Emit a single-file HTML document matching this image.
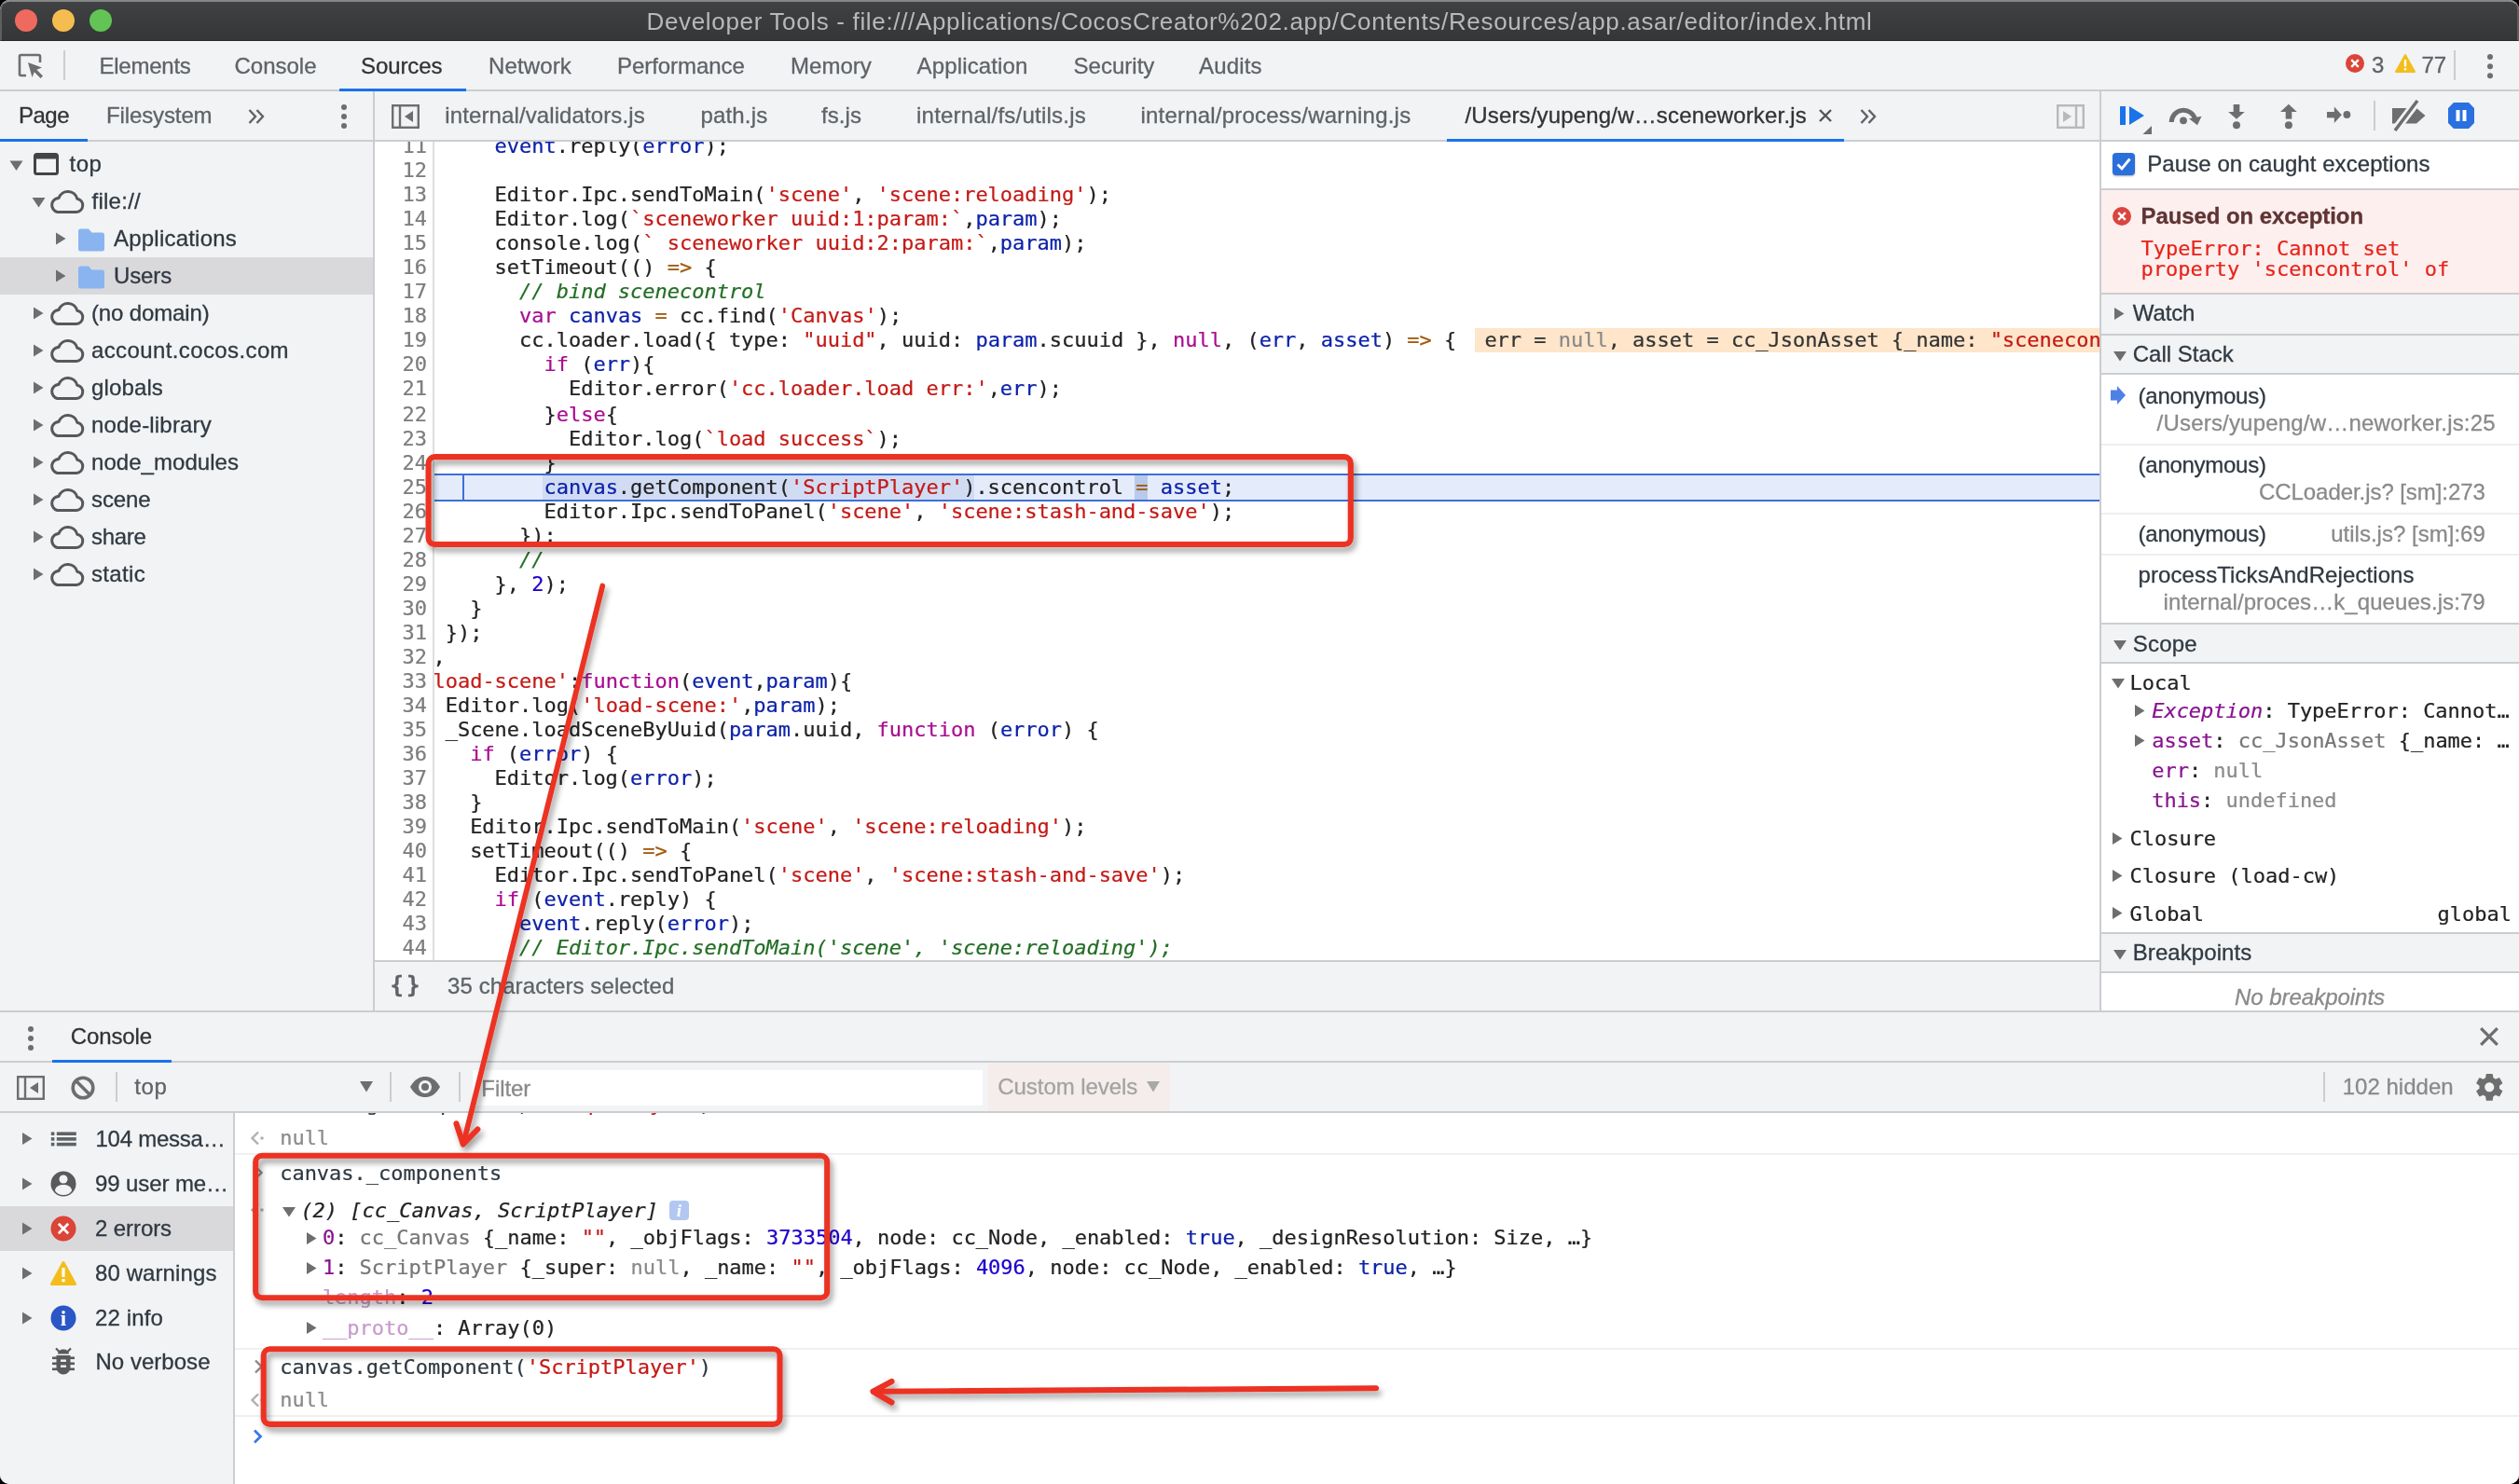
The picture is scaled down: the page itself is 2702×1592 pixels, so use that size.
<!DOCTYPE html>
<html lang="en">
<head>
<meta charset="utf-8">
<title>Developer Tools</title>
<style>
html,body{margin:0;padding:0;background:#000;}
body{width:2702px;height:1592px;overflow:hidden;position:relative;font-family:"Liberation Sans",sans-serif;font-size:24px;color:#303942;}
#win{position:absolute;left:0;top:0;width:2702px;height:1592px;overflow:hidden;border-radius:10px;background:#fff;will-change:transform;}
.a{position:absolute;}
.t{position:absolute;white-space:nowrap;line-height:28px;height:28px;-webkit-text-stroke:0.3px currentColor;}
.m{font-family:"DejaVu Sans Mono","Liberation Mono",monospace;font-size:22px;line-height:26px;white-space:pre;letter-spacing:-0.02px;-webkit-text-stroke:0.22px currentColor;}
.g{color:#5f6368;}
.bar{background:#f1f3f4;}
.hl{position:absolute;background:#cbcdd1;}
.vd{position:absolute;width:2px;background:#cdcdcd;}
svg{position:absolute;overflow:visible;}
/* title bar */
#title{position:absolute;left:0;top:0;width:2702px;height:44px;background:linear-gradient(#404143,#353638);box-sizing:border-box;border-top:2px solid #858688;border-left:2px solid #5e5f61;border-right:2px solid #5e5f61;border-bottom:1.500px solid #28292a;border-radius:10px 10px 0 0;}
#title .hi{display:none;}
.tl{position:absolute;top:8px;margin-left:-2px;width:24px;height:24px;border-radius:50%;}
#ttext{position:absolute;left:-2px;width:2702px;text-align:center;top:4.800px;font-size:26px;line-height:32px;color:#b9b9b9;white-space:nowrap;}
/* code */
.k{color:#aa0d91;} .s{color:#c41a16;} .v{color:#0d22aa;} .n{color:#1c00cf;} .c{color:#236e25;font-style:italic;} .o{color:#a1590c;} .at{color:#aa0d91;}
#code,#gut{white-space:normal;}
#code div{height:26px;white-space:pre;}
#code div:nth-child(11),#gut div:nth-child(11){margin-bottom:2px;}
#gut div{height:26px;text-align:right;color:#7d7d7d;}
/* object props */
.pn{color:#881391;} .gy{color:#8a8a8a;} .gn{color:#777;} .bk{color:#222;}
</style>
</head>
<body>
<div id="win">
<!-- TITLE BAR -->
<div id="title"><div class="hi"></div>
<div class="tl" style="left:16px;background:#ee6a5f;"></div>
<div class="tl" style="left:56px;background:#f5bd4f;"></div>
<div class="tl" style="left:96px;background:#61c454;"></div>
<div id="ttext"><span style="letter-spacing:0.664px">Developer Tools - file:///Applications/CocosCreator%202.app/Contents/Resources/app.asar/editor/index.html</span></div>
</div>
<!-- MAIN TABS -->
<div class="a bar" style="left:0;top:44px;width:2702px;height:52px;"></div>
<div class="hl" style="left:0;top:96px;width:2702px;height:2px;"></div>
<svg style="left:19px;top:57px;" width="28" height="28" viewBox="0 0 28 28"><path d="M24 10V3.5a1.5 1.5 0 0 0-1.500-1.500H3.500A1.500 1.500 0 0 0 2 3.500V22.500A1.500 1.500 0 0 0 3.500 24H9" fill="none" stroke="#6e6e6e" stroke-width="2.6"/><path d="M11 10 L26 15.500 L20.300 17.800 L27 24.500 L24.500 27 L17.800 20.300 L15.500 26 Z" fill="#6e6e6e"/></svg>
<div class="vd" style="left:68px;top:54px;height:32px;"></div>
<div class="t g" style="left:106.500px;top:56.800px;"><span style="letter-spacing:-0.243px">Elements</span></div>
<div class="t g" style="left:251.500px;top:56.800px;"><span style="letter-spacing:-0.009px">Console</span></div>
<div class="t" style="left:387px;top:56.800px;color:#333;"><span style="letter-spacing:-0.092px">Sources</span></div>
<div class="t g" style="left:524px;top:56.800px;"><span style="letter-spacing:0.138px">Network</span></div>
<div class="t g" style="left:662px;top:56.800px;"><span style="letter-spacing:-0.054px">Performance</span></div>
<div class="t g" style="left:848px;top:56.800px;"><span style="letter-spacing:0.038px">Memory</span></div>
<div class="t g" style="left:983.600px;top:56.800px;"><span style="letter-spacing:0.143px">Application</span></div>
<div class="t g" style="left:1151.500px;top:56.800px;"><span style="letter-spacing:0.025px">Security</span></div>
<div class="t g" style="left:1286px;top:56.800px;"><span style="letter-spacing:0.149px">Audits</span></div>
<div class="a" style="left:364px;top:95px;width:136px;height:3px;background:#1a73e8;"></div>
<!-- error / warning counters -->
<svg style="left:2516px;top:58px;" width="20" height="20" viewBox="0 0 20 20"><circle cx="10" cy="10" r="10" fill="#db4437"/><path d="M6.200 6.200 L13.800 13.800 M13.800 6.200 L6.200 13.800" stroke="#fff" stroke-width="2.400"/></svg>
<div class="t g" style="left:2544px;top:56.400px;">3</div>
<svg style="left:2569px;top:58px;" width="22" height="20" viewBox="0 0 22 20"><path d="M11 1 L21 19 H1 Z" fill="#f4bd1c" stroke="#f4bd1c" stroke-width="2" stroke-linejoin="round"/><rect x="9.800" y="6" width="2.400" height="7.500" fill="#fff"/><rect x="9.800" y="15" width="2.400" height="2.400" fill="#fff"/></svg>
<div class="t g" style="left:2597.500px;top:56.400px;">77</div>
<div class="vd" style="left:2632px;top:54px;height:32px;"></div>
<svg style="left:2666px;top:56px;" width="10" height="30" viewBox="0 0 10 30"><circle cx="5" cy="5" r="3" fill="#6e6e6e"/><circle cx="5" cy="15.200" r="3" fill="#6e6e6e"/><circle cx="5" cy="25.300" r="3" fill="#6e6e6e"/></svg>
<!-- SOURCES: second bar -->
<div class="a bar" style="left:0;top:98px;width:2702px;height:52px;"></div>
<div class="hl" style="left:0;top:150px;width:2702px;height:2px;"></div>
<!-- NAVIGATOR -->
<div class="a bar" style="left:0;top:152px;width:400px;height:932px;"></div>
<div class="hl" style="left:400px;top:98px;width:2px;height:986px;"></div>
<div class="t" style="left:20px;top:109.500px;color:#333;"><span style="letter-spacing:-0.516px">Page</span></div>
<div class="t g" style="left:114px;top:109.500px;"><span style="letter-spacing:-0.119px">Filesystem</span></div>
<svg style="left:266px;top:116px;" width="18" height="18" viewBox="0 0 18 18"><path d="M1.500 2 L8 9 L1.500 16 M9.500 2 L16 9 L9.500 16" fill="none" stroke="#5f6368" stroke-width="2.400"/></svg>
<svg style="left:364px;top:110px;" width="10" height="30" viewBox="0 0 10 30"><circle cx="5" cy="5" r="3" fill="#6e6e6e"/><circle cx="5" cy="15" r="3" fill="#6e6e6e"/><circle cx="5" cy="25" r="3" fill="#6e6e6e"/></svg>
<div class="a" style="left:0;top:149px;width:94px;height:3px;background:#1a73e8;"></div>
<!-- tree -->
<div class="a" style="left:0;top:276px;width:400px;height:40px;background:#d9d9dc;"></div>
<svg style="left:0;top:152px;" width="400" height="520" viewBox="0 0 400 520">
<g transform="translate(10.500,20.500)"><path d="M0 0 H14 L7 10.500 Z" fill="#6e6e6e"/></g>
<rect x="37.500" y="13.500" width="24" height="21" rx="2" fill="none" stroke="#444" stroke-width="3"/><rect x="37.500" y="13.500" width="24" height="5" fill="#444"/>
<g transform="translate(34.500,60)"><path d="M0 0 H14 L7 10.500 Z" fill="#6e6e6e"/></g>
<g transform="translate(53,48)"><path transform="translate(-2.4,1.2) scale(1.14)" d="M9.500 23 H27.500 A6.300 6.300 0 0 0 28.200 10.500 A9 9 0 0 0 11 9.800 A6.700 6.700 0 0 0 9.500 23 Z" fill="none" stroke="#56585c" stroke-width="2.650" stroke-linejoin="round"/></g>
<g transform="translate(60,97.500)"><path d="M0 0 L10.500 6.500 L0 13 Z" fill="#6e6e6e"/></g><g transform="translate(84,93.500)"><path d="M0 2.500 A2.500 2.500 0 0 1 2.500 0 H11 L14.500 4 H25.500 A2.500 2.500 0 0 1 28 6.500 V21.500 A2.500 2.500 0 0 1 25.500 24 H2.500 A2.500 2.500 0 0 1 0 21.500 Z" fill="#8ab4f0"/></g>
<g transform="translate(60,137.500)"><path d="M0 0 L10.500 6.500 L0 13 Z" fill="#6e6e6e"/></g><g transform="translate(84,133.500)"><path d="M0 2.500 A2.500 2.500 0 0 1 2.500 0 H11 L14.500 4 H25.500 A2.500 2.500 0 0 1 28 6.500 V21.500 A2.500 2.500 0 0 1 25.500 24 H2.500 A2.500 2.500 0 0 1 0 21.500 Z" fill="#8ab4f0"/></g>
<g transform="translate(36,177.500)"><path d="M0 0 L10.500 6.500 L0 13 Z" fill="#6e6e6e"/></g><g transform="translate(53,168)"><path transform="translate(-2.4,1.2) scale(1.14)" d="M9.500 23 H27.500 A6.300 6.300 0 0 0 28.200 10.500 A9 9 0 0 0 11 9.800 A6.700 6.700 0 0 0 9.500 23 Z" fill="none" stroke="#56585c" stroke-width="2.650" stroke-linejoin="round"/></g>
<g transform="translate(36,217.500)"><path d="M0 0 L10.500 6.500 L0 13 Z" fill="#6e6e6e"/></g><g transform="translate(53,208)"><path transform="translate(-2.4,1.2) scale(1.14)" d="M9.500 23 H27.500 A6.300 6.300 0 0 0 28.200 10.500 A9 9 0 0 0 11 9.800 A6.700 6.700 0 0 0 9.500 23 Z" fill="none" stroke="#56585c" stroke-width="2.650" stroke-linejoin="round"/></g>
<g transform="translate(36,257.500)"><path d="M0 0 L10.500 6.500 L0 13 Z" fill="#6e6e6e"/></g><g transform="translate(53,248)"><path transform="translate(-2.4,1.2) scale(1.14)" d="M9.500 23 H27.500 A6.300 6.300 0 0 0 28.200 10.500 A9 9 0 0 0 11 9.800 A6.700 6.700 0 0 0 9.500 23 Z" fill="none" stroke="#56585c" stroke-width="2.650" stroke-linejoin="round"/></g>
<g transform="translate(36,297.500)"><path d="M0 0 L10.500 6.500 L0 13 Z" fill="#6e6e6e"/></g><g transform="translate(53,288)"><path transform="translate(-2.4,1.2) scale(1.14)" d="M9.500 23 H27.500 A6.300 6.300 0 0 0 28.200 10.500 A9 9 0 0 0 11 9.800 A6.700 6.700 0 0 0 9.500 23 Z" fill="none" stroke="#56585c" stroke-width="2.650" stroke-linejoin="round"/></g>
<g transform="translate(36,337.500)"><path d="M0 0 L10.500 6.500 L0 13 Z" fill="#6e6e6e"/></g><g transform="translate(53,328)"><path transform="translate(-2.4,1.2) scale(1.14)" d="M9.500 23 H27.500 A6.300 6.300 0 0 0 28.200 10.500 A9 9 0 0 0 11 9.800 A6.700 6.700 0 0 0 9.500 23 Z" fill="none" stroke="#56585c" stroke-width="2.650" stroke-linejoin="round"/></g>
<g transform="translate(36,377.500)"><path d="M0 0 L10.500 6.500 L0 13 Z" fill="#6e6e6e"/></g><g transform="translate(53,368)"><path transform="translate(-2.4,1.2) scale(1.14)" d="M9.500 23 H27.500 A6.300 6.300 0 0 0 28.200 10.500 A9 9 0 0 0 11 9.800 A6.700 6.700 0 0 0 9.500 23 Z" fill="none" stroke="#56585c" stroke-width="2.650" stroke-linejoin="round"/></g>
<g transform="translate(36,417.500)"><path d="M0 0 L10.500 6.500 L0 13 Z" fill="#6e6e6e"/></g><g transform="translate(53,408)"><path transform="translate(-2.4,1.2) scale(1.14)" d="M9.500 23 H27.500 A6.300 6.300 0 0 0 28.200 10.500 A9 9 0 0 0 11 9.800 A6.700 6.700 0 0 0 9.500 23 Z" fill="none" stroke="#56585c" stroke-width="2.650" stroke-linejoin="round"/></g>
<g transform="translate(36,457.500)"><path d="M0 0 L10.500 6.500 L0 13 Z" fill="#6e6e6e"/></g><g transform="translate(53,448)"><path transform="translate(-2.4,1.2) scale(1.14)" d="M9.500 23 H27.500 A6.300 6.300 0 0 0 28.200 10.500 A9 9 0 0 0 11 9.800 A6.700 6.700 0 0 0 9.500 23 Z" fill="none" stroke="#56585c" stroke-width="2.650" stroke-linejoin="round"/></g>
</svg>
<div class="t" style="left:74.500px;top:161.500px;"><span style="letter-spacing:0.542px">top</span></div>
<div class="t" style="left:98.500px;top:201.500px;"><span style="letter-spacing:0.259px">file://</span></div>
<div class="t" style="left:122px;top:241.500px;"><span style="letter-spacing:0.215px">Applications</span></div>
<div class="t" style="left:122px;top:281.500px;"><span style="letter-spacing:-0.134px">Users</span></div>
<div class="t" style="left:98px;top:321.500px;"><span style="letter-spacing:-0.142px">(no domain)</span></div>
<div class="t" style="left:98px;top:361.500px;"><span style="letter-spacing:0.386px">account.cocos.com</span></div>
<div class="t" style="left:98px;top:401.500px;"><span style="letter-spacing:0.134px">globals</span></div>
<div class="t" style="left:98px;top:441.500px;"><span style="letter-spacing:0.189px">node-library</span></div>
<div class="t" style="left:98px;top:481.500px;"><span style="letter-spacing:0.046px">node_modules</span></div>
<div class="t" style="left:98px;top:521.500px;"><span style="letter-spacing:-0.109px">scene</span></div>
<div class="t" style="left:98px;top:561.500px;"><span style="letter-spacing:-0.309px">share</span></div>
<div class="t" style="left:98px;top:601.500px;"><span style="letter-spacing:0.331px">static</span></div>
<!-- EDITOR TAB STRIP -->
<svg style="left:420px;top:112px;" width="30" height="26" viewBox="0 0 30 26"><rect x="1.200" y="1.200" width="27.600" height="23.600" fill="none" stroke="#6e6e6e" stroke-width="2.400"/><path d="M9 1 V25" stroke="#6e6e6e" stroke-width="2.400"/><path d="M23 7 L14 13 L23 19 Z" fill="#6e6e6e"/></svg>
<div class="t g" style="left:477.300px;top:109.500px;"><span style="letter-spacing:0.109px">internal/validators.js</span></div>
<div class="t g" style="left:751.400px;top:109.500px;"><span style="letter-spacing:0.183px">path.js</span></div>
<div class="t g" style="left:881px;top:109.500px;"><span style="letter-spacing:0.066px">fs.js</span></div>
<div class="t g" style="left:983px;top:109.500px;"><span style="letter-spacing:0.230px">internal/fs/utils.js</span></div>
<div class="t g" style="left:1223.400px;top:109.500px;"><span style="letter-spacing:0.217px">internal/process/warning.js</span></div>
<div class="t" style="left:1571.400px;top:109.500px;color:#333;"><span style="letter-spacing:0.167px">/Users/yupeng/w…sceneworker.js</span></div>
<svg style="left:1950px;top:116px;" width="16" height="16" viewBox="0 0 16 16"><path d="M2 2 L14 14 M14 2 L2 14" stroke="#555" stroke-width="2.400"/></svg>
<div class="a" style="left:1552px;top:149px;width:426px;height:3px;background:#1a73e8;"></div>
<svg style="left:1995px;top:116px;" width="18" height="18" viewBox="0 0 18 18"><path d="M1.500 2 L8 9 L1.500 16 M9.500 2 L16 9 L9.500 16" fill="none" stroke="#5f6368" stroke-width="2.400"/></svg>
<svg style="left:2206px;top:112px;" width="30" height="26" viewBox="0 0 30 26"><rect x="1.200" y="1.200" width="27.600" height="23.600" fill="none" stroke="#b9b9b9" stroke-width="2.400"/><path d="M21 1 V25" stroke="#b9b9b9" stroke-width="2.400"/><path d="M7 7 L16 13 L7 19 Z" fill="#b9b9b9"/></svg>
<!-- EDITOR -->
<div class="a" id="ed" style="left:402px;top:152px;width:1850px;height:878px;background:#fff;overflow:hidden;">
 <!-- execution line -->
 <div class="a" style="left:64px;top:355.700px;width:1790px;height:30px;background:#e4ebfb;border-top:2px solid #3d6fd8;border-bottom:2px solid #3d6fd8;box-sizing:border-box;"></div>
 <div class="a" style="left:94px;top:355.700px;width:2px;height:30px;background:#3d6fd8;"></div>
 <div class="a" style="left:180px;top:357.700px;width:463px;height:26px;background:#d1dcf3;"></div>
 <div class="a" style="left:814.500px;top:357.700px;width:14px;height:26px;background:#b9c9ea;"></div>
 <!-- inline values line 19 -->
 <div class="a" style="left:1180px;top:200.400px;width:700px;height:25.200px;background:#ffe5c9;"></div>
 <div class="a m" style="left:1190.400px;top:200px;color:#333;">err = <span class="gy">null</span>, asset = cc_JsonAsset {_name: <span class="s">"scenecontrol"</span></div>
 <div id="code" class="a m" style="left:22.800px;top:-8px;color:#222;line-height:26px;">
<div>        <span class="v">event</span>.reply(<span class="v">error</span>);</div>
<div> </div>
<div>        Editor.Ipc.sendToMain(<span class="s">'scene'</span>, <span class="s">'scene:reloading'</span>);</div>
<div>        Editor.log(<span class="s">`sceneworker uuid:1:param:`</span>,<span class="v">param</span>);</div>
<div>        console.log(<span class="s">` sceneworker uuid:2:param:`</span>,<span class="v">param</span>);</div>
<div>        setTimeout(() <span class="o">=&gt;</span> {</div>
<div>          <span class="c">// bind scenecontrol</span></div>
<div>          <span class="k">var</span> <span class="v">canvas</span> <span class="o">=</span> cc.find(<span class="s">'Canvas'</span>);</div>
<div>          cc.loader.load({ type: <span class="s">"uuid"</span>, uuid: <span class="v">param</span>.scuuid }, <span class="at">null</span>, (<span class="v">err</span>, <span class="v">asset</span>) <span class="o">=&gt;</span> {</div>
<div>            <span class="k">if</span> (<span class="v">err</span>){</div>
<div>              Editor.error(<span class="s">'cc.loader.load err:'</span>,<span class="v">err</span>);</div>
<div>            }<span class="k">else</span>{</div>
<div>              Editor.log(<span class="s">`load success`</span>);</div>
<div>            }</div>
<div>            <span class="v">canvas</span>.getComponent(<span class="s">'ScriptPlayer'</span>).scencontrol <span class="o">=</span> <span class="v">asset</span>;</div>
<div>            Editor.Ipc.sendToPanel(<span class="s">'scene'</span>, <span class="s">'scene:stash-and-save'</span>);</div>
<div>          });</div>
<div>          <span class="c">//</span></div>
<div>        }, <span class="n">2</span>);</div>
<div>      }</div>
<div>    });</div>
<div>   ,</div>
<div>  <span class="s">'load-scene'</span>:<span class="k">function</span>(<span class="v">event</span>,<span class="v">param</span>){</div>
<div>    Editor.log(<span class="s">'load-scene:'</span>,<span class="v">param</span>);</div>
<div>    _Scene.loadSceneByUuid(<span class="v">param</span>.uuid, <span class="k">function</span> (<span class="v">error</span>) {</div>
<div>      <span class="k">if</span> (<span class="v">error</span>) {</div>
<div>        Editor.log(<span class="v">error</span>);</div>
<div>      }</div>
<div>      Editor.Ipc.sendToMain(<span class="s">'scene'</span>, <span class="s">'scene:reloading'</span>);</div>
<div>      setTimeout(() <span class="o">=&gt;</span> {</div>
<div>        Editor.Ipc.sendToPanel(<span class="s">'scene'</span>, <span class="s">'scene:stash-and-save'</span>);</div>
<div>        <span class="k">if</span> (<span class="v">event</span>.reply) {</div>
<div>          <span class="v">event</span>.reply(<span class="v">error</span>);</div>
<div>          <span class="c">// Editor.Ipc.sendToMain('scene', 'scene:reloading');</span></div>
 </div>
 <!-- gutter -->
 <div class="a" style="left:0;top:0;width:62px;height:878px;background:#fff;"></div>
 <div class="a" style="left:62px;top:0;width:2px;height:878px;background:#dedede;"></div>
 <div id="gut" class="a m" style="left:0;top:-8px;width:56px;line-height:26px;">
<div>11</div><div>12</div><div>13</div><div>14</div><div>15</div><div>16</div><div>17</div><div>18</div><div>19</div><div>20</div><div>21</div><div>22</div><div>23</div><div>24</div><div>25</div><div>26</div><div>27</div><div>28</div><div>29</div><div>30</div><div>31</div><div>32</div><div>33</div><div>34</div><div>35</div><div>36</div><div>37</div><div>38</div><div>39</div><div>40</div><div>41</div><div>42</div><div>43</div><div>44</div>
 </div>
</div>
<!-- editor status bar -->
<div class="hl" style="left:402px;top:1030px;width:1850px;height:2px;"></div>
<div class="a bar" style="left:402px;top:1032px;width:1850px;height:52px;"></div>
<div class="t g" style="left:418.600px;top:1043.300px;font-family:'DejaVu Sans Mono',monospace;font-size:24px;font-weight:bold;letter-spacing:3px;">{}</div>
<div class="t g" style="left:480px;top:1043.700px;"><span style="letter-spacing:0.092px">35 characters selected</span></div>
<!-- DEBUGGER SIDEBAR -->
<div class="hl" style="left:2252px;top:98px;width:2px;height:986px;"></div>
<div class="a" style="left:2254px;top:152px;width:448px;height:932px;background:#fff;"></div>
<!-- debug toolbar icons -->
<svg style="left:2270px;top:108px;" width="400" height="40" viewBox="0 0 400 40">
<g fill="#1a73e8"><rect x="4" y="6" width="6" height="20"/><path d="M14 6 L30 16 L14 26 Z"/></g>
<path d="M38 27 V36 H28.500 Z" fill="#6e6e6e"/>
<path d="M59.200 23 A12.900 12.900 0 0 1 84.600 20" fill="none" stroke="#6e6e6e" stroke-width="5"/>
<path d="M78 19.300 L91.500 16.800 L87 26.200 Z" fill="#6e6e6e"/><circle cx="72" cy="21.300" r="3.900" fill="#6e6e6e"/>
<g fill="#6e6e6e"><rect x="125.700" y="4" width="6.600" height="9"/><path d="M120.200 12 H137.700 L129 19.800 Z"/><circle cx="129" cy="26.200" r="4"/></g>
<g fill="#6e6e6e"><rect x="181.700" y="11" width="6.600" height="8.600"/><path d="M176 12 H193.800 L184.900 3.800 Z"/><circle cx="184.900" cy="26.200" r="4"/></g>
<g fill="#6e6e6e"><rect x="226" y="12" width="9" height="6.400"/><path d="M233.800 6.500 L241.800 15.200 L233.800 23.900 Z"/><circle cx="247.400" cy="15" r="3.900"/></g>
<rect x="276" y="0" width="2" height="32" fill="#cdcdcd"/>
<path d="M296 8 H322 L331.500 16 L322 24.500 H296 Z" fill="#6e6e6e"/>
<path d="M298 33 L324 -1" stroke="#f1f3f4" stroke-width="9"/><path d="M299 32 L323 0" stroke="#6e6e6e" stroke-width="3.600"/>
<path d="M362.400 3 H377.600 L383 8.400 V23.600 L377.600 29 H362.400 L357 23.600 V8.400 Z" fill="#2a70e0" stroke="#2a70e0" stroke-width="2" stroke-linejoin="round"/>
<rect x="364.500" y="10" width="4" height="12" fill="#fff"/><rect x="371.500" y="10" width="4" height="12" fill="#fff"/>
</svg>
<!-- pause on caught -->
<div class="a" style="left:2266px;top:164px;width:24px;height:24px;border-radius:4px;background:#2b6fdb;box-shadow:0 1px 2px rgba(0,0,0,.35);"></div>
<svg style="left:2266px;top:164px;" width="24" height="24" viewBox="0 0 24 24"><path d="M5.500 12.500 L10 17 L18.500 6.500" fill="none" stroke="#fff" stroke-width="2.800"/></svg>
<div class="t" style="left:2303.300px;top:162px;"><span style="letter-spacing:0.067px">Pause on caught exceptions</span></div>
<div class="hl" style="left:2254px;top:202px;width:448px;height:2px;"></div>
<!-- paused banner -->
<div class="a" style="left:2254px;top:204px;width:448px;height:110px;background:#fdefee;"></div>
<svg style="left:2266px;top:222px;" width="20" height="20" viewBox="0 0 20 20"><circle cx="10" cy="10" r="10" fill="#d9453f"/><path d="M6.200 6.200 L13.800 13.800 M13.800 6.200 L6.200 13.800" stroke="#fff" stroke-width="2.400"/></svg>
<div class="t" style="left:2296.600px;top:218.200px;font-weight:bold;color:#5f3434;"><span style="letter-spacing:-0.087px">Paused on exception</span></div>
<div class="a m" style="left:2296.500px;top:255.600px;line-height:22px;color:#e8241b;">TypeError: Cannot set
property 'scencontrol' of</div>
<!-- Watch -->
<div class="hl" style="left:2254px;top:314px;width:448px;height:2px;"></div>
<div class="a bar" style="left:2254px;top:316px;width:448px;height:42px;"></div>
<svg style="left:2268px;top:329.500px;" width="11" height="14" viewBox="0 0 11 14"><path d="M0 0 L10.500 6.500 L0 13 Z" fill="#6e6e6e"/></svg>
<div class="t" style="left:2287.800px;top:321.900px;"><span style="letter-spacing:-0.125px">Watch</span></div>
<div class="hl" style="left:2254px;top:358px;width:448px;height:2px;"></div>
<!-- Call Stack -->
<div class="a bar" style="left:2254px;top:360px;width:448px;height:40px;"></div>
<svg style="left:2266.500px;top:376.500px;" width="14" height="11" viewBox="0 0 14 11"><path d="M0 0 H14 L7 10.500 Z" fill="#6e6e6e"/></svg>
<div class="t" style="left:2287.800px;top:366px;"><span style="letter-spacing:-0.005px">Call Stack</span></div>
<div class="hl" style="left:2254px;top:400px;width:448px;height:2px;"></div>
<svg style="left:2264px;top:414px;" width="16" height="20" viewBox="0 0 16 20"><path d="M0 4.500 H7 V0 L16 10 L7 20 V15.500 H0 Z" fill="#4e80e6"/></svg>
<div class="t" style="left:2293.600px;top:410.700px;"><span style="letter-spacing:-0.278px">(anonymous)</span></div>
<div class="t" style="left:2313.600px;top:440.200px;color:#8a8a8a;"><span style="letter-spacing:0.190px">/Users/yupeng/w…neworker.js:25</span></div>
<div class="a" style="left:2254px;top:476px;width:448px;height:2px;background:#efefef;"></div>
<div class="t" style="left:2293.600px;top:484.600px;"><span style="letter-spacing:-0.278px">(anonymous)</span></div>
<div class="t" style="left:2423px;top:514.200px;color:#8a8a8a;"><span style="letter-spacing:-0.063px">CCLoader.js? [sm]:273</span></div>
<div class="a" style="left:2254px;top:550px;width:448px;height:2px;background:#efefef;"></div>
<div class="t" style="left:2293.600px;top:558.800px;"><span style="letter-spacing:-0.278px">(anonymous)</span></div>
<div class="t" style="left:2500.200px;top:558.800px;color:#8a8a8a;"><span style="letter-spacing:0.012px">utils.js? [sm]:69</span></div>
<div class="a" style="left:2254px;top:594px;width:448px;height:2px;background:#efefef;"></div>
<div class="t" style="left:2293.600px;top:602.800px;"><span style="letter-spacing:0.084px">processTicksAndRejections</span></div>
<div class="t" style="left:2320.600px;top:631.900px;color:#8a8a8a;"><span style="letter-spacing:0.077px">internal/proces…k_queues.js:79</span></div>
<!-- Scope -->
<div class="hl" style="left:2254px;top:668px;width:448px;height:2px;"></div>
<div class="a bar" style="left:2254px;top:670px;width:448px;height:40px;"></div>
<svg style="left:2266.500px;top:686.500px;" width="14" height="11" viewBox="0 0 14 11"><path d="M0 0 H14 L7 10.500 Z" fill="#6e6e6e"/></svg>
<div class="t" style="left:2287.800px;top:676.600px;"><span style="letter-spacing:0.188px">Scope</span></div>
<div class="hl" style="left:2254px;top:710px;width:448px;height:2px;"></div>
<svg style="left:2264.500px;top:728px;" width="14" height="11" viewBox="0 0 14 11"><path d="M0 0 H14 L7 10.500 Z" fill="#6e6e6e"/></svg>
<div class="a m bk" style="left:2284.500px;top:719.900px;">Local</div>
<svg style="left:2290px;top:756px;" width="11" height="14" viewBox="0 0 11 14"><path d="M0 0 L10.500 6.500 L0 13 Z" fill="#6e6e6e"/></svg>
<div class="a m bk" style="left:2308.200px;top:750.100px;width:386px;overflow:hidden;"><span class="pn" style="font-style:italic;">Exception</span>: TypeError: Cannot…</div>
<svg style="left:2290px;top:788px;" width="11" height="14" viewBox="0 0 11 14"><path d="M0 0 L10.500 6.500 L0 13 Z" fill="#6e6e6e"/></svg>
<div class="a m bk" style="left:2308.200px;top:781.900px;"><span class="pn">asset</span>: <span class="gn">cc_JsonAsset</span> {_name: …</div>
<div class="a m bk" style="left:2308.200px;top:814.300px;"><span class="pn">err</span>: <span class="gy">null</span></div>
<div class="a m bk" style="left:2308.200px;top:845.800px;"><span class="pn">this</span>: <span class="gy">undefined</span></div>
<svg style="left:2266px;top:893px;" width="11" height="14" viewBox="0 0 11 14"><path d="M0 0 L10.500 6.500 L0 13 Z" fill="#6e6e6e"/></svg>
<div class="a m bk" style="left:2284.500px;top:887.300px;">Closure</div>
<svg style="left:2266px;top:933px;" width="11" height="14" viewBox="0 0 11 14"><path d="M0 0 L10.500 6.500 L0 13 Z" fill="#6e6e6e"/></svg>
<div class="a m bk" style="left:2284.500px;top:927.400px;">Closure (load-cw)</div>
<svg style="left:2266px;top:973px;" width="11" height="14" viewBox="0 0 11 14"><path d="M0 0 L10.500 6.500 L0 13 Z" fill="#6e6e6e"/></svg>
<div class="a m bk" style="left:2284.500px;top:967.500px;">Global</div>
<div class="a m bk" style="left:2614.500px;top:967.500px;">global</div>
<!-- Breakpoints -->
<div class="hl" style="left:2254px;top:1000px;width:448px;height:2px;"></div>
<div class="a bar" style="left:2254px;top:1002px;width:448px;height:40px;"></div>
<svg style="left:2266.500px;top:1018.500px;" width="14" height="11" viewBox="0 0 14 11"><path d="M0 0 H14 L7 10.500 Z" fill="#6e6e6e"/></svg>
<div class="t" style="left:2287.800px;top:1007.600px;"><span style="letter-spacing:0.068px">Breakpoints</span></div>
<div class="hl" style="left:2254px;top:1042px;width:448px;height:2px;"></div>
<div class="t" style="left:2397px;top:1055.900px;color:#8a8a8a;font-style:italic;"><span style="letter-spacing:-0.031px">No breakpoints</span></div>
<!-- DRAWER -->
<div class="hl" style="left:0;top:1084px;width:2702px;height:2px;"></div>
<div class="a bar" style="left:0;top:1086px;width:2702px;height:52px;"></div>
<svg style="left:28px;top:1098.500px;" width="10" height="30" viewBox="0 0 10 30"><circle cx="5" cy="5" r="3" fill="#6e6e6e"/><circle cx="5" cy="15" r="3" fill="#6e6e6e"/><circle cx="5" cy="25" r="3" fill="#6e6e6e"/></svg>
<div class="t" style="left:75.700px;top:1097.600px;color:#333;"><span style="letter-spacing:-0.109px">Console</span></div>
<svg style="left:2660px;top:1102px;" width="20" height="20" viewBox="0 0 20 20"><path d="M1.200 1.200 L18.800 18.800 M18.800 1.200 L1.200 18.800" stroke="#6e6e6e" stroke-width="3.300"/></svg>
<div class="hl" style="left:0;top:1138px;width:2702px;height:2px;"></div>
<div class="a" style="left:56px;top:1137px;width:128px;height:3px;background:#1a73e8;"></div>
<!-- console toolbar -->
<div class="a bar" style="left:0;top:1140px;width:2702px;height:52px;"></div>
<div class="hl" style="left:0;top:1192px;width:2702px;height:2px;"></div>
<svg style="left:18px;top:1154px;" width="30" height="26" viewBox="0 0 30 26"><rect x="1.200" y="1.200" width="27.600" height="23.600" fill="none" stroke="#6e6e6e" stroke-width="2.400"/><path d="M9 1 V25" stroke="#6e6e6e" stroke-width="2.400"/><path d="M23 7 L14 13 L23 19 Z" fill="#6e6e6e"/></svg>
<svg style="left:76px;top:1153.500px;" width="26" height="26" viewBox="0 0 26 26"><circle cx="13" cy="13" r="10.800" fill="none" stroke="#6e6e6e" stroke-width="3.600"/><path d="M5.500 5.500 L20.500 20.500" stroke="#6e6e6e" stroke-width="3.600"/></svg>
<div class="vd" style="left:124px;top:1150px;height:32px;"></div>
<div class="t g" style="left:144.300px;top:1151.700px;"><span style="letter-spacing:0.542px">top</span></div>
<svg style="left:386px;top:1160px;" width="14" height="12" viewBox="0 0 14 12"><path d="M0 0 H14 L7 11.500 Z" fill="#6e6e6e"/></svg>
<div class="vd" style="left:418px;top:1150px;height:32px;"></div>
<svg style="left:440px;top:1155px;" width="32" height="22" viewBox="0 0 32 22"><path d="M0 11 C5 2 11 0 16 0 C21 0 27 2 32 11 C27 20 21 22 16 22 C11 22 5 20 0 11 Z" fill="#6e6e6e"/><circle cx="16" cy="11" r="7" fill="#f1f3f4"/><circle cx="16" cy="11" r="4" fill="#6e6e6e"/></svg>
<div class="vd" style="left:492px;top:1150px;height:32px;"></div>
<div class="a" style="left:507px;top:1148px;width:547px;height:38px;background:#fff;"></div>
<div class="t" style="left:516.300px;top:1153.700px;color:#8a8a8a;"><span style="letter-spacing:-0.057px">Filter</span></div>
<div class="a" style="left:1059.500px;top:1140px;width:195px;height:52px;background:#f5edec;"></div>
<div class="t" style="left:1070.300px;top:1151.600px;color:#a3a3a3;"><span style="letter-spacing:-0.055px">Custom levels</span></div>
<svg style="left:1230.300px;top:1160px;" width="14" height="12" viewBox="0 0 14 12"><path d="M0 0 H14 L7 11.500 Z" fill="#a8a8a8"/></svg>
<div class="vd" style="left:2492px;top:1150px;height:32px;"></div>
<div class="t" style="left:2512.700px;top:1151.700px;color:#8a8a8a;"><span style="letter-spacing:0.022px">102 hidden</span></div>
<svg style="left:2652.600px;top:1148.700px;" width="34.500" height="34.500" viewBox="0 0 24 24"><path fill="#6e6e6e" d="M19.430 12.980c.040-.320.070-.640.070-.980s-.030-.660-.070-.980l2.110-1.650c.190-.150.240-.420.120-.640l-2-3.460c-.120-.220-.390-.300-.610-.220l-2.490 1c-.520-.400-1.080-.730-1.690-.980l-.380-2.650C14.460 2.180 14.250 2 14 2h-4c-.250 0-.460.180-.490.420l-.380 2.650c-.610.250-1.170.590-1.690.980l-2.490-1c-.230-.090-.490 0-.610.220l-2 3.460c-.130.220-.070.490.120.640l2.110 1.650c-.040.320-.070.650-.070.980s.030.660.070.980l-2.110 1.650c-.190.150-.240.420-.120.640l2 3.460c.120.220.390.300.610.220l2.490-1c.520.400 1.080.730 1.690.980l.380 2.650c.030.240.240.420.490.420h4c.250 0 .460-.180.490-.420l.380-2.650c.610-.250 1.170-.590 1.690-.980l2.490 1c.230.090.490 0 .610-.220l2-3.460c.120-.220.070-.490-.120-.640l-2.110-1.650zM12 15.500c-1.930 0-3.500-1.570-3.500-3.500s1.570-3.500 3.500-3.500 3.500 1.570 3.500 3.500-1.570 3.500-3.500 3.500z"/></svg>
<!-- console sidebar -->
<div class="a bar" style="left:0;top:1194px;width:250px;height:398px;"></div>
<div class="hl" style="left:250px;top:1194px;width:2px;height:398px;"></div>
<div class="a" style="left:0;top:1294px;width:250px;height:48px;background:#d9d9dc;"></div>
<svg style="left:0;top:1193px;" width="250" height="300" viewBox="0 0 250 300">
<g transform="translate(24,22)"><path d="M0 0 L10.500 6.500 L0 13 Z" fill="#6e6e6e"/></g><g transform="translate(24,70.500)"><path d="M0 0 L10.500 6.500 L0 13 Z" fill="#6e6e6e"/></g><g transform="translate(24,118.500)"><path d="M0 0 L10.500 6.500 L0 13 Z" fill="#6e6e6e"/></g><g transform="translate(24,166.500)"><path d="M0 0 L10.500 6.500 L0 13 Z" fill="#6e6e6e"/></g><g transform="translate(24,214.500)"><path d="M0 0 L10.500 6.500 L0 13 Z" fill="#6e6e6e"/></g>
<g fill="#5f6368"><rect x="54.800" y="21.400" width="3.600" height="3.600"/><rect x="54.800" y="27.100" width="3.600" height="3.600"/><rect x="54.800" y="32.800" width="3.600" height="3.600"/><rect x="60.800" y="21.400" width="21" height="3.600"/><rect x="60.800" y="27.100" width="21" height="3.600"/><rect x="60.800" y="32.800" width="21" height="3.600"/></g>
<circle cx="68" cy="77" r="13.500" fill="#5a5a5a"/><circle cx="68" cy="72" r="4.500" fill="#f1f3f4"/><path d="M59 84.500 C59 79.500 64 78 68 78 C72 78 77 79.500 77 84.500 C75 87.500 71.500 89 68 89 C64.500 89 61 87.500 59 84.500 Z" fill="#f1f3f4"/>
<circle cx="68" cy="125" r="13.500" fill="#db4437"/><path d="M62.800 119.800 L73.200 130.200 M73.200 119.800 L62.800 130.200" stroke="#fff" stroke-width="2.700"/>
<path d="M68 161.500 L80.500 184.500 H55.500 Z" fill="#f4bd1c" stroke="#f4bd1c" stroke-width="3" stroke-linejoin="round"/><rect x="66.400" y="167" width="3.200" height="10" fill="#fff"/><rect x="66.400" y="179" width="3.200" height="3.200" fill="#fff"/>
<circle cx="68" cy="221" r="13.500" fill="#2a56c6"/><text x="68" y="229" text-anchor="middle" font-family="Liberation Serif, serif" font-weight="bold" font-size="23" fill="#fff">i</text>
<g fill="#5a5a5a"><path d="M60.500 261 H75.500 V274 A7.500 7.500 0 0 1 60.500 274 Z"/><path d="M62 259.500 A6 5 0 0 1 74 259.500 Z"/><path d="M60 253.500 L64 257.500 M76 253.500 L72 257.500" stroke="#5a5a5a" stroke-width="2.200"/><rect x="56" y="262.500" width="24" height="2.600"/><rect x="56" y="268.500" width="24" height="2.600"/><rect x="56" y="274.500" width="24" height="2.600"/></g>
<rect x="65" y="265.500" width="6" height="2.400" fill="#f1f3f4"/><rect x="65" y="271.500" width="6" height="2.400" fill="#f1f3f4"/>
</svg>
<div class="t" style="left:102.500px;top:1208.100px;"><span style="letter-spacing:-0.241px">104 messa…</span></div>
<div class="t" style="left:102px;top:1256.300px;"><span style="letter-spacing:-0.097px">99 user me…</span></div>
<div class="t" style="left:102px;top:1303.500px;"><span style="letter-spacing:-0.086px">2 errors</span></div>
<div class="t" style="left:102px;top:1352.200px;"><span style="letter-spacing:0.098px">80 warnings</span></div>
<div class="t" style="left:102px;top:1400.400px;"><span style="letter-spacing:0.134px">22 info</span></div>
<div class="t" style="left:102.500px;top:1447.300px;"><span style="letter-spacing:0.027px">No verbose</span></div>
<!-- console messages -->
<div class="a" id="con" style="left:252px;top:1194px;width:2450px;height:398px;background:#fff;overflow:hidden;"><div class="a" style="left:0;top:-1px;width:2450px;height:399px;">
<div class="a m" style="left:48.200px;top:-20.700px;color:#303942;">canvas.getComponent(<span class="s">'ScriptPlayer'</span>)</div>
<svg style="left:17px;top:20px;" width="16" height="16" viewBox="0 0 16 16"><path d="M8 1.500 L1.500 8 L8 14.500" fill="none" stroke="#b0b0b0" stroke-width="2.400"/><circle cx="12" cy="8" r="1.800" fill="#b0b0b0"/></svg>
<div class="a m gy" style="left:48.200px;top:15.400px;">null</div>
<div class="a" style="left:0;top:44px;width:2450px;height:2px;background:#f0f0f0;"></div>
<svg style="left:20px;top:57px;" width="12" height="16" viewBox="0 0 12 16"><path d="M2 1.500 L8.500 8 L2 14.500" fill="none" stroke="#8a8a8a" stroke-width="2.400"/></svg>
<div class="a m" style="left:48.200px;top:52.500px;color:#303942;">canvas._components</div>
<svg style="left:17px;top:97px;" width="16" height="16" viewBox="0 0 16 16"><path d="M8 1.500 L1.500 8 L8 14.500" fill="none" stroke="#b0b0b0" stroke-width="2.400"/><circle cx="12" cy="8" r="1.800" fill="#b0b0b0"/></svg>
<svg style="left:50.500px;top:102px;" width="14" height="11" viewBox="0 0 14 11"><path d="M0 0 H14 L7 10.500 Z" fill="#6e6e6e"/></svg>
<div class="a m bk" style="left:70.400px;top:93px;font-style:italic;">(2) [cc_Canvas, ScriptPlayer]</div>
<div class="a" style="left:466px;top:95.300px;width:21.300px;height:21px;border-radius:4px;background:#b3c7f3;"></div>
<div class="a" style="left:466.500px;top:93px;width:20px;text-align:center;font-family:'Liberation Serif',serif;font-style:italic;font-weight:bold;font-size:19px;line-height:26px;color:#fff;">i</div>
<svg style="left:77px;top:129px;" width="11" height="14" viewBox="0 0 11 14"><path d="M0 0 L10.500 6.500 L0 13 Z" fill="#6e6e6e"/></svg>
<div class="a m bk" style="left:93.900px;top:122.200px;"><span class="pn">0</span>: <span class="gn">cc_Canvas</span> {_name: <span class="s">""</span>, _objFlags: <span class="n">3733504</span>, node: cc_Node, _enabled: <span class="v">true</span>, _designResolution: Size, …}</div>
<svg style="left:77px;top:161px;" width="11" height="14" viewBox="0 0 11 14"><path d="M0 0 L10.500 6.500 L0 13 Z" fill="#6e6e6e"/></svg>
<div class="a m bk" style="left:93.900px;top:154px;"><span class="pn">1</span>: <span class="gn">ScriptPlayer</span> {_super: <span class="gy">null</span>, _name: <span class="s">""</span>, _objFlags: <span class="n">4096</span>, node: cc_Node, _enabled: <span class="v">true</span>, …}</div>
<div class="a m bk" style="left:93.900px;top:185.600px;"><span style="color:#c79bcb;">length</span>: <span class="n">2</span></div>
<svg style="left:77px;top:225px;" width="11" height="14" viewBox="0 0 11 14"><path d="M0 0 L10.500 6.500 L0 13 Z" fill="#6e6e6e"/></svg>
<div class="a m bk" style="left:93.900px;top:218.600px;"><span style="color:#c79bcb;">__proto__</span>: Array(0)</div>
<div class="a" style="left:0;top:253px;width:2450px;height:2px;background:#f0f0f0;"></div>
<svg style="left:20px;top:265px;" width="12" height="16" viewBox="0 0 12 16"><path d="M2 1.500 L8.500 8 L2 14.500" fill="none" stroke="#8a8a8a" stroke-width="2.400"/></svg>
<div class="a m" style="left:48.200px;top:260.700px;color:#303942;">canvas.getComponent(<span class="s">'ScriptPlayer'</span>)</div>
<svg style="left:17px;top:301px;" width="16" height="16" viewBox="0 0 16 16"><path d="M8 1.500 L1.500 8 L8 14.500" fill="none" stroke="#b0b0b0" stroke-width="2.400"/><circle cx="12" cy="8" r="1.800" fill="#b0b0b0"/></svg>
<div class="a m gy" style="left:48.200px;top:296.100px;">null</div>
<div class="a" style="left:0;top:325px;width:2450px;height:2px;background:#f0f0f0;"></div>
<svg style="left:19px;top:339.500px;" width="12" height="16" viewBox="0 0 12 16"><path d="M2 1.500 L8.500 8 L2 14.500" fill="none" stroke="#3b78e7" stroke-width="2.800"/></svg>
</div></div>
<!-- ANNOTATIONS -->
<svg style="left:0;top:0;" width="2702" height="1592" viewBox="0 0 2702 1592">
<defs><filter id="sh" x="-5%" y="-5%" width="110%" height="115%"><feGaussianBlur in="SourceAlpha" stdDeviation="3"/><feOffset dx="3" dy="5"/><feComponentTransfer><feFuncA type="linear" slope="0.380"/></feComponentTransfer><feMerge><feMergeNode/><feMergeNode in="SourceGraphic"/></feMerge></filter></defs>
<g filter="url(#sh)" fill="none" stroke="#ec3023" stroke-width="6.100" stroke-linecap="round" stroke-linejoin="round">
<rect x="459.600" y="490.100" width="989.200" height="93.900" rx="6.800"/>
<rect x="274.200" y="1239.800" width="613" height="152.400" rx="6.800"/>
<rect x="282.700" y="1447.300" width="553.800" height="80.600" rx="6.800"/>
<path d="M646.300 628.500 L497.300 1226" stroke-width="5.700"/>
<path d="M489.500 1205.500 L496.800 1227.500 L512.300 1211.500"/>
<path d="M1476 1489.300 L937 1492.800"/>
<path d="M956.500 1482 L936.500 1492.800 L956.500 1504.500"/>
</g>
</svg>
</div>
</body>
</html>
